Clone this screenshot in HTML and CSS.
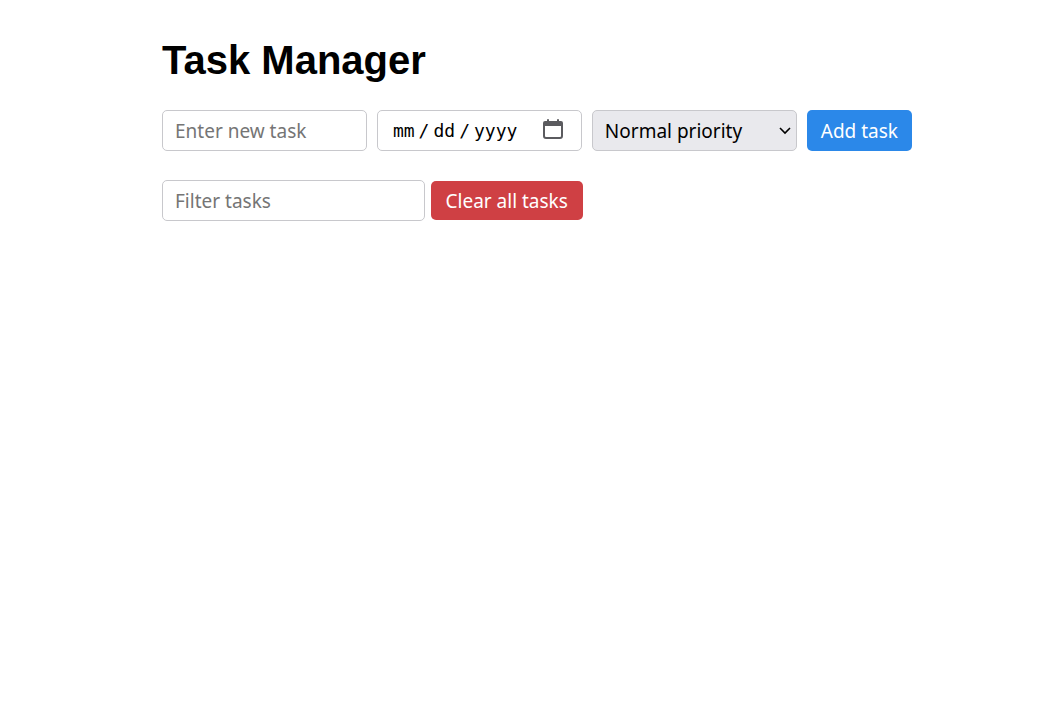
FILE: index.html
```
<!DOCTYPE html>
<html lang="en">
<head>
<meta charset="utf-8">
<title>Task Manager</title>
<link rel="stylesheet" href="styles.css">
</head>
<body>
<main class="app">
  <h1 class="title">Task Manager</h1>
  <form class="task-form">
    <input class="field" type="text" placeholder="Enter new task" aria-label="New task">
    <div class="date-field">
      <input class="field date-input" type="date" aria-label="Due date">
      <svg class="calendar" viewBox="0 0 20 20" width="20" height="20" aria-hidden="true"><path d="M1 4v13a2 2 0 0 0 2 2h14a2 2 0 0 0 2-2V4" fill="none" stroke="#5b5b5f" stroke-width="2"/><path d="M0 7V4a2 2 0 0 1 2-2h2V1a1 1 0 0 1 2 0v1h8V1a1 1 0 0 1 2 0v1h2a2 2 0 0 1 2 2v3z" fill="#5b5b5f"/></svg>
    </div>
    <div class="select-field">
      <select class="field priority" aria-label="Priority">
        <option>Low priority</option>
        <option selected>Normal priority</option>
        <option>High priority</option>
      </select>
      <svg class="chevron" viewBox="0 0 12 8" width="12" height="8" aria-hidden="true"><path d="M1 1l5 5 5-5" fill="none" stroke="#000" stroke-width="1.6"/></svg>
    </div>
    <button class="button add" type="submit">Add task</button>
  </form>
  <div class="toolbar">
    <input class="field filter" type="text" placeholder="Filter tasks" aria-label="Filter tasks">
    <button class="button clear" type="button">Clear all tasks</button>
  </div>
</main>
</body>
</html>
```
FILE: styles.css
```
* {
  box-sizing: border-box;
}

body {
  margin: 0;
  padding-left: 21px;
  background: #fff;
  color: #000;
  font-family: "Noto Sans", sans-serif;
}

.app {
  max-width: 750px;
  margin: 36px auto;
}

.title {
  margin: 0 0 26px;
  font: bold 40px/48px "Liberation Sans", Arial, sans-serif;
}

.task-form {
  display: grid;
  grid-template-columns: 1fr 1fr 1fr auto;
  gap: 10px;
  margin-bottom: 29px;
}

.field,
.button {
  font-family: "Noto Sans", sans-serif;
  font-size: 19px;
  line-height: 23px;
  border-radius: 5px;
}

.field {
  display: block;
  width: 100%;
  min-width: 0;
  height: 41px;
  padding: 8px 12px;
  border: 1px solid #c8c8cc;
  background: #fff;
  color: #000;
}

.field::placeholder {
  color: #757575;
  opacity: 1;
}

.date-field,
.select-field {
  position: relative;
  min-width: 0;
}

.date-input {
  padding: 8px 14px;
  font-family: "DejaVu Sans Mono", monospace;
  font-size: 18px;
}

.date-input::-webkit-datetime-edit-text {
  padding: 0 3px;
}

.date-input::-webkit-calendar-picker-indicator {
  width: 20px;
  margin: 0;
  opacity: 0;
}

.calendar {
  position: absolute;
  right: 19px;
  top: 9px;
  pointer-events: none;
}

.priority {
  appearance: none;
  padding: 9px 12px 7px;
  background: #e9e9ed;
}

.chevron {
  position: absolute;
  right: 6px;
  top: 17px;
  pointer-events: none;
}

.button {
  padding: 9px 14px 7px;
  border: 0;
  color: #fff;
}

.add {
  background: #2b88e9;
}

.toolbar {
  display: flex;
  align-items: center;
  gap: 6px;
}

.filter {
  width: 35%;
}

.clear {
  padding: 9px 15px 7px;
  background: #cf4044;
}
```
